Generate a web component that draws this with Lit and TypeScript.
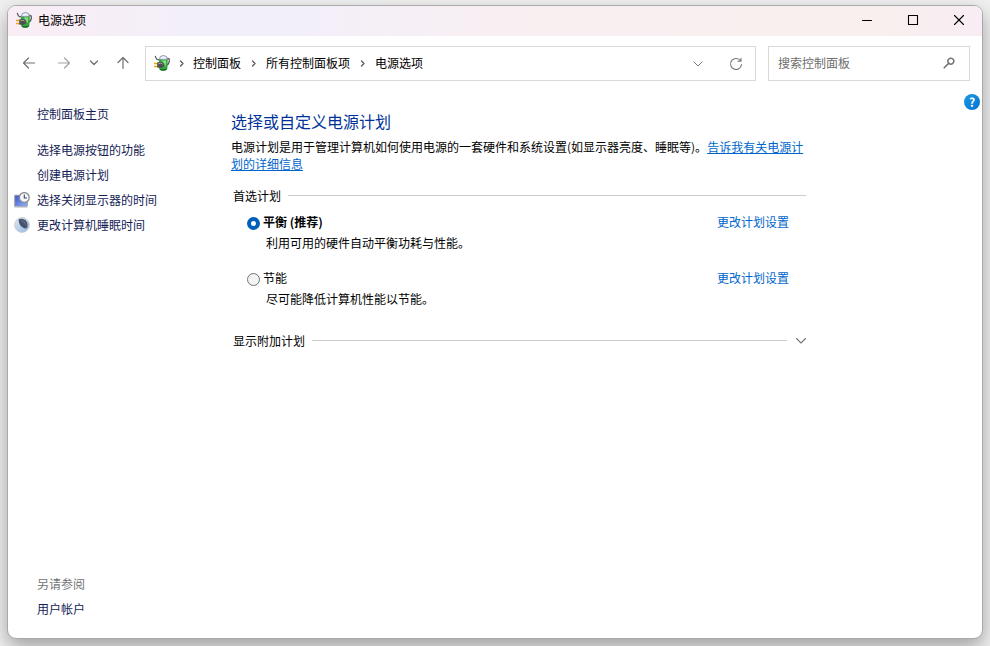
import { LitElement, html, css, svg } from "lit";
import { customElement, state } from "lit/decorators.js";

const powerIcon = html`<svg width="16" height="16" viewBox="0 0 16 16" aria-hidden="true">
  <path d="M13 3.4 Q15.6 2.8 15.3 6 Q15 9.4 12.4 10.4" fill="none" stroke="#555a55" stroke-width="1.3" />
  <path d="M5.4 4.4 Q5.4 .5 9.4 .5 Q13.4 .5 13.4 4.4Z" fill="#eef2fa" stroke="#7f8ba8" stroke-width=".9" />
  <path d="M4.8 4.2 Q9.2 5.6 13.8 4.2 L13.4 13.6 Q12.6 15.8 9.2 15.8 Q5.8 15.8 5.2 13.6Z" fill="#33a83c" />
  <path d="M8 5.4 L12.2 5.2 L12 10.4 L9.8 10.6Z" fill="#7fe07c" />
  <path d="M5.4 13.6 Q9.4 15 13.2 13.2 L12.8 14.8 Q9.4 16.4 6 15Z" fill="#1a6d22" />
  <path d="M1.2 .8 Q2.4 5.4 5 4.6" fill="none" stroke="#565c64" stroke-width="1.2" />
  <path d="M0 8.4 H4 M0 11.4 H4" stroke="#e5a817" stroke-width="1.5" />
  <path d="M3.2 7.6 L6.4 6.8 Q9.8 7.4 10.4 9 L10.4 10.8 Q9.4 12.6 6.4 13 L3.2 12.4Z" fill="#505050" />
  <path d="M4.4 8.8 L6.6 8.2 Q8.4 8.4 8.8 9.4" fill="none" stroke="#a6a6a6" stroke-width="1" />
</svg>`;

const displayIcon = html`<svg width="16" height="16" viewBox="0 0 16 16" aria-hidden="true">
  <defs>
    <linearGradient id="screen" x1="0" y1="0" x2="1" y2="1">
      <stop offset="0" stop-color="#3c52cf" />
      <stop offset="1" stop-color="#8fb4fa" />
    </linearGradient>
  </defs>
  <path d="M.8 3.3 H13.2 V14.2 H.8Z" fill="url(#screen)" stroke="#8d93a6" />
  <path d="M.5 15.2 H13.5" stroke="#c3c6d0" />
  <circle cx="10.3" cy="5.5" r="4.9" fill="#f7f8fa" stroke="#8c8c90" stroke-width="1.3" />
  <path d="M10.3 2.5 V6 H13" fill="none" stroke="#39465f" stroke-width="1.1" />
</svg>`;

const sleepIcon = html`<svg width="16" height="16" viewBox="0 0 16 16" aria-hidden="true">
  <defs>
    <linearGradient id="moon" x1="0" y1="0" x2="1" y2="1">
      <stop offset="0" stop-color="#e6ebf0" />
      <stop offset="1" stop-color="#8fb6e6" />
    </linearGradient>
  </defs>
  <circle cx="8" cy="8" r="7.4" fill="url(#moon)" stroke="#c6ccd4" stroke-width=".9" />
  <path d="M4.6 2.4 Q8.4 .6 11.6 3.2 Q14.6 6.4 13.2 10.4 Q11.8 12 9.6 11 Q4.6 8.4 4.6 2.4Z" fill="#46526b" />
  <path d="M7 3.6 Q11 4 12 8.4" fill="none" stroke="#5f6d88" stroke-width="1.2" />
</svg>`;

const stroke = (size: number, d: string, width = 1.2) => html`<svg
  width=${size} height=${size} viewBox="0 0 ${size} ${size}" fill="none"
  stroke="currentColor" stroke-width=${width} stroke-linecap="round" stroke-linejoin="round"
  aria-hidden="true">${svg`<path d=${d} />`}</svg>`;

const base = css`
  * { box-sizing: border-box; }
  button {
    display: flex; align-items: center; justify-content: center;
    padding: 0; border: 0; background: none; color: inherit; font: inherit;
  }
  a { color: inherit; text-decoration: none; }
  svg { display: block; flex: none; }
`;

@customElement("title-bar")
class TitleBar extends LitElement {
  static styles = [base, css`
    :host {
      display: flex; align-items: center; height: 30px; padding: 0 0 2px 8px;
      background: linear-gradient(90deg, #faedf5 0%, #f3eff9 18%, #f3eff9 30%, #f9eff1 55%, #f8efee 90%, #f8edf4 100%);
    }
    .title { margin: 0 auto 0 6px; font-size: 12px; font-weight: 400; line-height: 16px; color: #000; }
    .control { width: 46px; height: 28px; color: #000; }
  `];
  render() {
    return html`
      ${powerIcon}
      <h1 class="title">电源选项</h1>
      <button class="control" aria-label="最小化">${stroke(12, "M1.5 6.5 H10.5", 1)}</button>
      <button class="control" aria-label="最大化">${stroke(12, "M1.5 1.5 H10.5 V10.5 H1.5Z", 1.1)}</button>
      <button class="control" aria-label="关闭">${stroke(12, "M1.5 1.5 L10.5 10.5 M10.5 1.5 L1.5 10.5", 1.1)}</button>
    `;
  }
}

@customElement("nav-bar")
class NavBar extends LitElement {
  static styles = [base, css`
    :host { display: flex; align-items: center; padding: 10px 12px 0 6px; font-size: 12px; line-height: 16px; }
    .history { display: flex; align-items: center; gap: 5px; margin-right: 8px; padding-bottom: 2px; color: #707070; }
    .arrow { width: 30px; height: 30px; }
    .recent { width: 20px; height: 30px; }
    .up { width: 28px; height: 30px; }
    .arrow:disabled { color: #a3a3a3; }
    .address {
      display: flex; align-items: center; flex: 1; min-width: 0; height: 35px;
      padding: 0 8px 2px; border: 1px solid #d9d9d9; background: #fff;
    }
    .crumbs { display: flex; align-items: center; margin: 0 auto 0 0; padding: 0; list-style: none; white-space: nowrap; }
    .crumb { display: flex; align-items: center; color: #000; }
    .sep { display: flex; justify-content: center; width: 25px; color: #5c5c5c; }
    .crumb:first-child .sep { width: 23px; }
    .tool { width: 22px; height: 30px; margin-left: 16px; padding-top: 2px; color: #777; }
    .search {
      display: flex; align-items: center; width: 202px; height: 35px; margin-left: 12px;
      padding: 0 13px 2px 9px; border: 1px solid #d9d9d9; color: #757575;
    }
    .field {
      flex: 1; min-width: 0; height: 24px; padding: 0; border: 0; outline: 0;
      background: none; color: #000; font: inherit;
    }
    .field::placeholder { color: #6d6d6d; opacity: 1; }
  `];
  render() {
    const path = ["控制面板", "所有控制面板项", "电源选项"];
    return html`
      <div class="history">
        <button class="arrow" aria-label="后退">${stroke(14, "M12.5 7 H1.5 M6.5 2 L1.5 7 L6.5 12")}</button>
        <button class="arrow" aria-label="前进" disabled>${stroke(14, "M1.5 7 H12.5 M7.5 2 L12.5 7 L7.5 12")}</button>
        <button class="recent" aria-label="最近位置">${stroke(10, "M1.5 3 L5 6.5 L8.5 3", 1.3)}</button>
        <button class="up" aria-label="上移">${stroke(14, "M7 12.5 V1.5 M2 6.5 L7 1.5 L12 6.5")}</button>
      </div>
      <div class="address">
        ${powerIcon}
        <ol class="crumbs">
          ${path.map((name) => html`<li class="crumb">
            <span class="sep">${stroke(8, "M2.5 2 L5 4.5 L2.5 7", 1.4)}</span>
            <button>${name}</button>
          </li>`)}
        </ol>
        <button class="tool" aria-label="以前的位置">${stroke(10, "M1 3 L5 7 L9 3", 1)}</button>
        <button class="tool" aria-label="刷新">${stroke(14, "M11.6 3.9 A5.5 5.5 0 1 0 12.5 7.6 M12 1.2 V4.3 H8.9", 1.1)}</button>
      </div>
      <label class="search">
        <input class="field" type="text" placeholder="搜索控制面板" aria-label="搜索控制面板" />
        ${stroke(14, "M8.9 2.2 A3 3 0 1 1 8.8 2.2 M6.6 7.4 L2.2 11.8", 1.6)}
      </label>
    `;
  }
}

@customElement("side-panel")
class SidePanel extends LitElement {
  static styles = [base, css`
    :host {
      display: flex; flex-direction: column; flex: none; width: 223px; box-sizing: border-box;
      padding: 20px 8px 17px 6px; font-size: 12px; color: #151c55;
    }
    .list { margin: 0; padding: 0; list-style: none; }
    .tasks { margin-top: 11px; }
    .also { margin-top: auto; }
    .row { display: grid; grid-template-columns: 16px 1fr; column-gap: 7px; align-items: center; height: 25px; }
    .text { grid-column: 2; grid-row: 1; margin: 0; font-size: 12px; font-weight: 400; line-height: 16px; }
    .muted { color: #757575; }
  `];
  render() {
    const tasks = [
      { text: "选择电源按钮的功能", icon: null },
      { text: "创建电源计划", icon: null },
      { text: "选择关闭显示器的时间", icon: displayIcon },
      { text: "更改计算机睡眠时间", icon: sleepIcon },
    ];
    return html`
      <div class="row"><a class="text" href="#home">控制面板主页</a></div>
      <ul class="list tasks">
        ${tasks.map((t) => html`<li class="row">${t.icon}<a class="text" href="#task">${t.text}</a></li>`)}
      </ul>
      <div class="also">
        <div class="row"><h2 class="text muted">另请参阅</h2></div>
        <div class="row"><a class="text" href="#accounts">用户帐户</a></div>
      </div>
    `;
  }
}

@customElement("power-plans")
class PowerPlans extends LitElement {
  static styles = [base, css`
    :host { display: block; flex: 0 1 575px; min-width: 0; padding-top: 28px; font-size: 12px; line-height: 17px; color: #000; }
    .heading { margin: 0; font-size: 16px; font-weight: 400; line-height: 24px; color: #003399; }
    .intro { margin: 5px 0 0; }
    .more { color: #0066cc; text-decoration: underline; }
    .group { display: flex; align-items: center; gap: 7px; height: 17px; padding-left: 2px; }
    .name { margin: 0; font-size: 12px; font-weight: 400; }
    .rule { flex: 1; height: 1px; background: #cccccc; }
    .first { margin-top: 15px; }
    .extra { margin-top: 25px; }
    .toggle { width: 10px; height: 17px; margin-left: 2px; color: #777; }
    .plans { display: grid; gap: 18px; margin: 9px 17px 0 16px; }
    .plan { display: grid; grid-template-columns: 13px 1fr auto; column-gap: 3px; row-gap: 4px; align-items: center; }
    .radio {
      appearance: none; width: 13px; height: 13px; margin: 4px 0 0;
      border: 1px solid #737373; border-radius: 50%; background: #f3f3f3;
    }
    .radio:checked { border: 4px solid #005fb8; background: #fff; }
    .chosen { font-weight: 700; }
    .change { color: #0066cc; }
    .about { grid-column: 2 / 4; margin: 0; padding-left: 3px; }
  `];
  @state() private selected = "balanced";
  render() {
    const plans = [
      { id: "balanced", label: "平衡 (推荐)", about: "利用可用的硬件自动平衡功耗与性能。" },
      { id: "saver", label: "节能", about: "尽可能降低计算机性能以节能。" },
    ];
    return html`
      <h2 class="heading">选择或自定义电源计划</h2>
      <p class="intro">电源计划是用于管理计算机如何使用电源的一套硬件和系统设置(如显示器亮度、睡眠等)。<a class="more" href="#more">告诉我有关电源计划的详细信息</a></p>
      <div class="group first"><h3 class="name">首选计划</h3><span class="rule"></span></div>
      <div class="plans">
        ${plans.map((p) => html`<div class="plan">
          <input class="radio" type="radio" name="plan" id=${p.id}
            .checked=${this.selected === p.id} @change=${() => { this.selected = p.id; }} />
          <label class=${this.selected === p.id ? "chosen" : ""} for=${p.id}>${p.label}</label>
          <a class="change" href="#settings">更改计划设置</a>
          <p class="about">${p.about}</p>
        </div>`)}
      </div>
      <div class="group extra">
        <h3 class="name">显示附加计划</h3><span class="rule"></span>
        <button class="toggle" aria-label="展开">${stroke(10, "M.5 2.5 L5 7 L9.5 2.5", 1.1)}</button>
      </div>
    `;
  }
}

@customElement("app-root")
class AppRoot extends LitElement {
  static styles = [base, css`
    :host {
      display: flex; min-height: 100vh; box-sizing: border-box; overflow: hidden;
      padding: 5px 7px 7px; background: #f1f1f1;
      font-family: "Noto Sans CJK SC", "Noto Sans", sans-serif;
    }
    .window {
      display: flex; flex-direction: column; flex: 1; min-width: 0; overflow: hidden;
      border: 1px solid #a9a9a9; border-radius: 9px; background: #fff;
      box-shadow: 0 8px 20px rgba(0, 0, 0, 0.34);
    }
    .body { display: flex; flex: 1; padding-right: 2px; }
    .help {
      flex: none; width: 16px; height: 16px; margin: 13px 0 0 auto; border-radius: 50%;
      background: linear-gradient(135deg, #1f9ade, #0072d8); color: #fff;
      font-size: 12px; font-weight: 700; line-height: 16px;
    }
  `];
  render() {
    return html`
      <div class="window">
        <title-bar></title-bar>
        <nav-bar></nav-bar>
        <div class="body">
          <side-panel></side-panel>
          <power-plans></power-plans>
          <button class="help" aria-label="帮助">?</button>
        </div>
      </div>
    `;
  }
}
